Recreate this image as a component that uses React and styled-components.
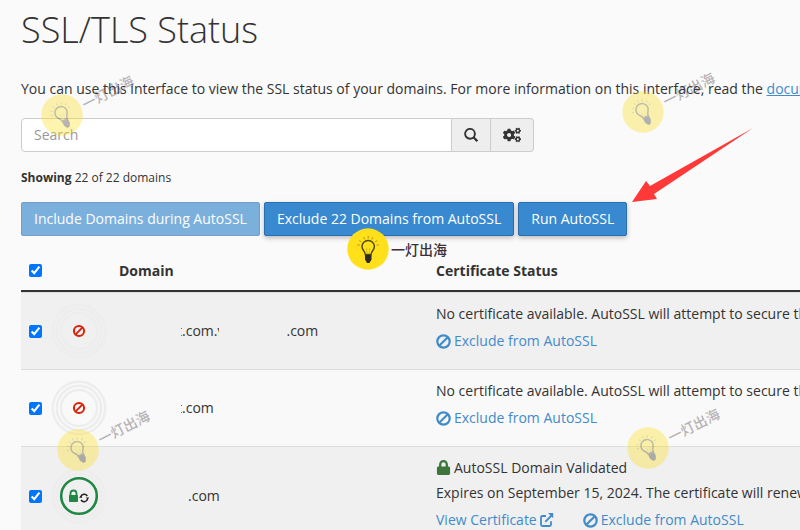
import React, { useState } from 'react';
import styled, { createGlobalStyle } from 'styled-components';
import { FaCogs, FaLock } from 'react-icons/fa';

const GlobalStyle = createGlobalStyle`
  * {
    box-sizing: border-box;
  }

  body {
    margin: 0;
    background-color: #fafafa;
    color: #333;
    font-family: 'Open Sans', 'Noto Sans', sans-serif;
    font-size: 14px;
    line-height: 20px;
    overflow: hidden;
  }
`;

const Page = styled.main`
  position: relative;
  padding: 4px 0 0 21px;
  overflow: hidden;
  white-space: nowrap;
`;

const Title = styled.h1`
  margin: 0;
  font-size: 36px;
  font-weight: 300;
  line-height: 52px;
`;

const Intro = styled.p`
  margin: 23px 0 19px;

  a {
    color: #428bca;
  }
`;

const SearchForm = styled.form`
  display: flex;
  max-width: 513px;
  height: 34px;
`;

const SearchInput = styled.input`
  flex: 1;
  min-width: 0;
  padding: 0 12px;
  border: 1px solid #ccc;
  border-radius: 4px 0 0 4px;
  background-color: #fff;
  color: #333;
  font: inherit;

  &::placeholder {
    color: #999;
    opacity: 1;
  }
`;

const AddonButton = styled.button`
  display: flex;
  align-items: center;
  justify-content: center;
  padding: 0 12px;
  border: 1px solid #ccc;
  border-left: 0;
  background-color: #eee;
  color: #333;
  cursor: pointer;

  &:last-child {
    border-radius: 0 4px 4px 0;
  }
`;

const Summary = styled.p`
  margin: 16px 0 14px;
  font-size: 12px;
`;

const Actions = styled.div`
  display: flex;
  gap: 4px;
`;

const ActionButton = styled.button`
  height: 34px;
  padding: 0 12px;
  border: 1px solid #2a6db0;
  border-radius: 2px;
  background-color: #3889cf;
  box-shadow: 0 2px 5px rgba(0, 0, 0, 0.26);
  color: #fff;
  font: inherit;
  cursor: pointer;

  &:disabled {
    opacity: 0.65;
    box-shadow: none;
    cursor: not-allowed;
  }
`;

const Table = styled.table`
  width: 100%;
  margin-top: 14px;
  table-layout: fixed;
  border-spacing: 0;
`;

const Col = styled.col`
  width: ${(props) => props.$width};
`;

const HeadCell = styled.th`
  height: 42px;
  padding: 1px 8px 0;
  border-bottom: 2px solid #333;
  font-weight: 700;
  text-align: left;
`;

const Row = styled.tr`
  background-color: #f9f9f9;

  &:nth-child(odd) {
    background-color: #f0f0f0;
  }
`;

const Cell = styled.td`
  padding: 0 8px;
  border-top: 1px solid #ddd;
`;

const IconCell = styled(Cell)`
  padding: 0 0 0 1px;
`;

const StatusCell = styled(Cell)`
  padding: ${(props) => (props.$compact ? '8px 8px 10px' : '8px 8px 13px')};
  line-height: 25px;
  overflow: hidden;
`;

const Checkbox = styled.input`
  display: block;
  width: 13px;
  height: 13px;
  margin: 0;
`;

const BadgeSvg = styled.svg`
  display: block;
`;

const Domain = styled.div`
  display: flex;
`;

const Hidden = styled.span`
  width: ${(props) => props.$width};
`;

const Clipped = styled.span`
  display: flex;
  justify-content: ${(props) => (props.$end ? 'flex-end' : 'flex-start')};
  width: ${(props) => (props.$end ? 1 : 2)}px;
  overflow: hidden;
`;

const Validated = styled.div`
  display: flex;
  align-items: center;
  gap: 3px;

  svg {
    color: #3c763d;
  }
`;

const Links = styled.div`
  display: flex;
  gap: 29px;
  line-height: 30px;
`;

const StatusLink = styled.a`
  display: flex;
  align-items: center;
  gap: 3px;
  color: #428bca;
  text-decoration: none;
`;

const Mark = styled.div`
  position: absolute;
  display: flex;
  align-items: center;
  gap: 2px;
  height: 42px;
  left: ${(props) => props.$x}px;
  top: ${(props) => props.$y}px;
  opacity: ${(props) => (props.$faint ? 0.35 : 1)};
  transform: rotate(${(props) => (props.$faint ? -27 : 0)}deg);
  transform-origin: 21px 21px;
  color: #3b3038;
  font-family: 'Noto Sans CJK SC', sans-serif;
  font-weight: 500;
  font-size: 14px;
  pointer-events: none;
`;

const Arrow = styled.svg`
  position: absolute;
  left: 632px;
  top: 127px;
  pointer-events: none;
`;

function SearchIcon() {
  return (
    <svg width="14" height="14" viewBox="0 0 14 14" fill="none" stroke="currentColor" strokeWidth="1.9">
      <circle cx="6" cy="5.8" r="4.9" />
      <path d="M9.5 9.3L13.3 13.1" strokeWidth="2.2" />
    </svg>
  );
}

function BanIcon() {
  return (
    <svg width="15" height="15" viewBox="0 0 15 15" fill="none" stroke="currentColor" strokeWidth="2.2">
      <circle cx="7.5" cy="7.5" r="6.2" />
      <path d="M3.2 11.8L11.8 3.2" />
    </svg>
  );
}

function ExternalIcon() {
  return (
    <svg width="14" height="14" viewBox="0 0 14 14" fill="none" stroke="currentColor" strokeWidth="1.8">
      <path d="M6 3H2.4Q1 3 1 4.4V11.6Q1 13 2.4 13H9.6Q11 13 11 11.6V8.2" />
      <path d="M5.2 8.8L12 2" />
      <path d="M8 0H13.2V5.2Z" fill="currentColor" stroke="none" />
    </svg>
  );
}

function StatusBadge({ secured }) {
  return (
    <BadgeSvg width="56" height="56" viewBox="0 0 56 56" fill="none" role="img" aria-label={secured ? 'Secured' : 'No certificate'}>
      <circle cx="28" cy="28" r="26.2" stroke="#ededed" strokeWidth="2.4" />
      <circle cx="28" cy="28" r="22.2" stroke="#ededed" strokeWidth="2.4" />
      {secured ? (
        <>
          <circle cx="28" cy="28" r="17.8" stroke="#208843" strokeWidth="2.6" />
          <path d="M19.5 28V25.5A3 3 0 0 1 25.5 25.5V28" stroke="#208843" strokeWidth="1.8" />
          <rect x="18" y="27" width="9" height="7" rx="0.8" fill="#208843" />
          <path d="M29.7 29A3.6 3.6 0 0 1 36.3 28.1M36.6 31A3.6 3.6 0 0 1 30 31.9" stroke="#222" strokeWidth="1.5" />
          <path d="M34.7 29.4H38.3L36.7 31.4ZM28 29.8L29.6 27.8L31.4 29.8Z" fill="#222" />
        </>
      ) : (
        <>
          <circle cx="28" cy="28" r="18" stroke="#ededed" strokeWidth="2.4" />
          <circle cx="28" cy="28" r="5.1" stroke="#d9210b" strokeWidth="2" />
          <path d="M24.4 31.6L31.6 24.4" stroke="#d9210b" strokeWidth="2" />
        </>
      )}
    </BadgeSvg>
  );
}

function BrandMark({ x, y, faint }) {
  return (
    <Mark $x={x} $y={y} $faint={faint}>
      <svg width="42" height="42" viewBox="0 0 42 42" fill="none">
        <circle cx="21" cy="21" r="20.7" fill="#ffe01b" />
        <path
          d="M18.3 26.5C18.3 23 15 22.4 15 18.6A6.2 6.2 0 0 1 27.4 18.6C27.4 22.4 24.1 23 24.1 26.5Z"
          stroke="#544b12"
          strokeWidth="1.5"
        />
        <path d="M19.5 20L20.2 26M22.8 20L22.1 26" stroke="#c9b31a" strokeWidth="0.7" />
        <path d="M18 27H24.5V31.5L22.5 35H20L18 31.5Z" fill="#2d2928" />
        <path
          d="M21.2 8V10.5M16.6 9.2L17.6 11.4M26 9.2L24.8 11.4M12.4 12.6L14.2 13.8M30.2 12.6L28.2 13.8M10.5 17H12.8M31.8 17H29.6"
          stroke="#a08d19"
          strokeWidth="0.9"
        />
      </svg>
      <span>一灯出海</span>
    </Mark>
  );
}

function ExcludeLink() {
  return (
    <StatusLink href="#exclude">
      <BanIcon />
      Exclude from AutoSSL
    </StatusLink>
  );
}

const rows = [
  { id: 1, before: '62px', clipped: true, name: '.com.', after: '67px', tail: '.com' },
  { id: 2, before: '62px', clipped: true, name: '.com' },
  { id: 3, before: '69px', name: '.com', secured: true },
];

function DomainRow({ row, checked, onToggle }) {
  return (
    <Row>
      <Cell>
        <Checkbox type="checkbox" aria-label={`Select domain ${row.id}`} checked={checked} onChange={onToggle} />
      </Cell>
      <IconCell>
        <StatusBadge secured={row.secured} />
      </IconCell>
      <Cell>
        <Domain>
          <Hidden $width={row.before} />
          {row.clipped && <Clipped $end>t</Clipped>}
          {row.name}
          {row.tail && (
            <>
              <Clipped>v</Clipped>
              <Hidden $width={row.after} />
              {row.tail}
            </>
          )}
        </Domain>
      </Cell>
      <StatusCell $compact={row.secured}>
        {row.secured ? (
          <>
            <Validated>
              <FaLock size={15} />
              AutoSSL Domain Validated
            </Validated>
            <div>Expires on September 15, 2024. The certificate will renew via AutoSSL.</div>
            <Links>
              <StatusLink href="#certificate">
                View Certificate
                <ExternalIcon />
              </StatusLink>
              <ExcludeLink />
            </Links>
          </>
        ) : (
          <>
            <div>No certificate available. AutoSSL will attempt to secure this domain.</div>
            <Links>
              <ExcludeLink />
            </Links>
          </>
        )}
      </StatusCell>
    </Row>
  );
}

function App() {
  const [selected, setSelected] = useState([1, 2, 3]);
  const allSelected = selected.length === rows.length;

  const toggle = (id) => {
    setSelected(selected.includes(id) ? selected.filter((item) => item !== id) : [...selected, id]);
  };

  return (
    <Page>
      <GlobalStyle />
      <Title>SSL/TLS Status</Title>
      <Intro>
        You can use this interface to view the SSL status of your domains. For more information on this interface, read the{' '}
        <a href="#documentation">documentation</a>.
      </Intro>

      <SearchForm onSubmit={(e) => e.preventDefault()}>
        <SearchInput type="text" placeholder="Search" aria-label="Search" />
        <AddonButton type="submit" aria-label="Search domains">
          <SearchIcon />
        </AddonButton>
        <AddonButton type="button" aria-label="Settings">
          <FaCogs size={18} />
        </AddonButton>
      </SearchForm>

      <Summary>
        <strong>Showing</strong> 22 of 22 domains
      </Summary>

      <Actions>
        <ActionButton type="button" disabled>
          Include Domains during AutoSSL
        </ActionButton>
        <ActionButton type="button">Exclude 22 Domains from AutoSSL</ActionButton>
        <ActionButton type="button">Run AutoSSL</ActionButton>
      </Actions>

      <Table>
        <colgroup>
          <Col $width="29px" />
          <Col $width="61px" />
          <Col $width="317px" />
          <Col />
        </colgroup>
        <thead>
          <tr>
            <HeadCell>
              <Checkbox
                type="checkbox"
                aria-label="Select all domains"
                checked={allSelected}
                onChange={() => setSelected(allSelected ? [] : rows.map((row) => row.id))}
              />
            </HeadCell>
            <HeadCell aria-label="Status" />
            <HeadCell>Domain</HeadCell>
            <HeadCell>Certificate Status</HeadCell>
          </tr>
        </thead>
        <tbody>
          {rows.map((row) => (
            <DomainRow key={row.id} row={row} checked={selected.includes(row.id)} onToggle={() => toggle(row.id)} />
          ))}
        </tbody>
      </Table>

      <BrandMark x={347} y={228} />
      <BrandMark x={41} y={94} faint />
      <BrandMark x={622} y={91} faint />
      <BrandMark x={57} y={429} faint />
      <BrandMark x={627} y={427} faint />
      <Arrow width="122" height="76" viewBox="0 0 122 76">
        <path d="M0 75L14 54L18 59L121 1L22 67L25 72Z" fill="#ff3838" />
      </Arrow>
    </Page>
  );
}

export default App;
